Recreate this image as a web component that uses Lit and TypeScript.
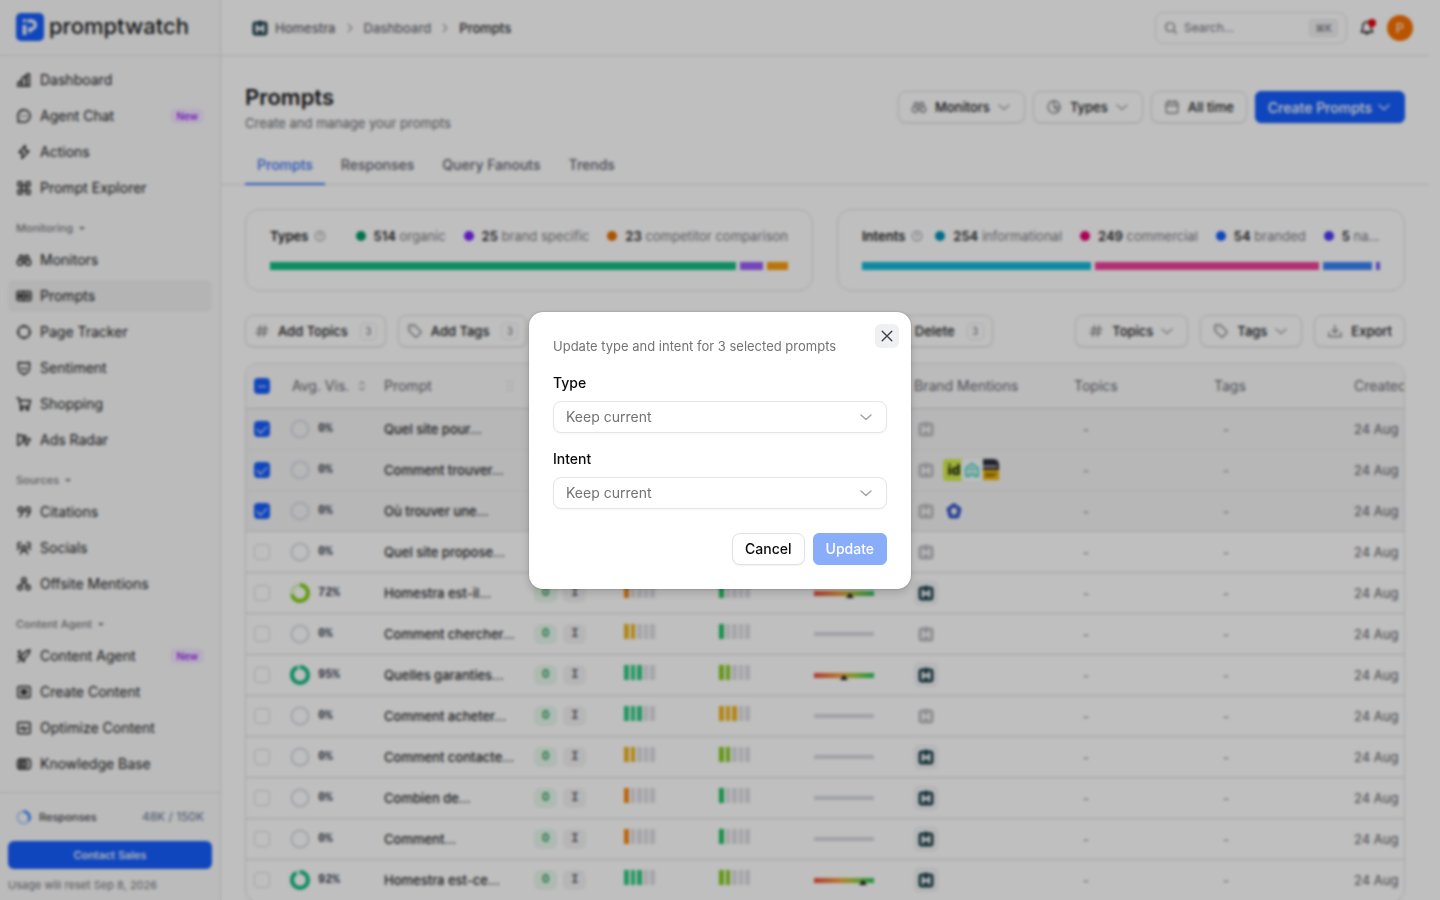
import { LitElement, html, svg, css, nothing } from "lit";
import { customElement, property } from "lit/decorators.js";
import { classMap } from "lit/directives/class-map.js";
import { styleMap } from "lit/directives/style-map.js";

const ICONS: Record<string, unknown> = {
  chart: svg`<path d="M2 14V10.500L5.500 9V14M6 14V6l4-2v10M10.500 14V2.500L13.500 2V14zM1.500 14h12.500"/>`,
  chat: svg`<path d="M8 1.800a6.200 6.200 0 1 1-2.700 11.800L2 14l.5-3.200A6.200 6.200 0 0 1 8 1.800zM5.500 8h.1M8 8h.1M10.500 8h.1"/>`,
  bolt: svg`<path d="M9.200 1.500 3 8.500h3.600l-.8 6L13 7H9.200z"/>`,
  grid: svg`<path d="M2 2h4v4H2zM10 2h4v4h-4zM2 10h4v4H2zM10 10h4v4h-4z"/><circle cx="8" cy="8" r="2.600"/>`,
  binoculars: svg`<path d="M3 6.500 4 3.500h2.500V7M13 6.500l-1-3H9.500V7M6.500 6h3M6.500 10h3"/><circle cx="4" cy="10.500" r="2.700"/><circle cx="12" cy="10.500" r="2.700"/>`,
  prompt: svg`<rect x="1" y="3.500" width="14" height="9" rx="1.500"/><path d="M7.500 3.500v9M3 6.500h2.500M3 8h2.500M3 9.500h2.500M9.500 6.500h3v3h-3z"/>`,
  target: svg`<circle cx="8" cy="8" r="6"/><path d="M8 1.200v2.300M8 12.500v2.300M1.200 8h2.300M12.500 8h2.300" stroke-width="1"/>`,
  shield: svg`<path d="M2.500 2.500 8 3l5.500-.5V8.500c0 2.500-2.500 4.500-5.500 6-3-1.500-5.500-3.500-5.500-6zM5.500 8c1.300 1.500 3.700 1.500 5 0"/>`,
  cart: svg`<path d="M1 2h2l1.800 8.500h8L14.500 4.500H3.700"/><circle cx="5.500" cy="13" r="1.200"/><circle cx="11.500" cy="13" r="1.200"/>`,
  radar: svg`<path d="M2 2v11.500l4.500-3M2 3l8.500 1.200M6.500 10.500l1-6M8.500 7h5.800l-1.800 3-2 3.500z"/>`,
  quotes: svg`<path d="M7 5.500a2.300 2.300 0 1 0-2.500 2.300H7V5.500c0 4-1 6-3.500 7M14 5.500a2.300 2.300 0 1 0-2.500 2.300H14V5.500c0 4-1 6-3.500 7"/>`,
  socials: svg`<circle cx="8" cy="8" r="2.200"/><path d="M4.500 14c.4-2.300 1.700-3.500 3.500-3.500s3.100 1.200 3.500 3.500M5 3a2 2 0 1 0-1.500 3.500M1.500 9.500 3.500 7M11 3a2 2 0 1 1 1.500 3.500M14.500 9.500 12.500 7"/>`,
  nodes: svg`<circle cx="8" cy="4.200" r="2.200"/><circle cx="4" cy="11.500" r="2.200"/><circle cx="12" cy="11.500" r="2.200"/><path d="M7 6.200 5.200 9.600M9 6.200l1.800 3.400"/>`,
  sparkpen: svg`<path d="M14 2 9.500 3.500 7 6.500 2 8.500l4 1.500 1.500 4 2-5 3-2.500zM2 14l3-3M3.500 2.500v3M2 4h3"/>`,
  create: svg`<rect x="1.800" y="2.500" width="12.400" height="11" rx="1.800"/><path d="M5 6h6M5 8h6M5 10h6M8 5.500v5"/>`,
  optimize: svg`<rect x="1.800" y="2.500" width="12.400" height="11" rx="1.200"/><path d="M4 8.500h2l1-2 1.500 4L10 8h2"/>`,
  knowledge: svg`<path d="M4.500 3h7A3 3 0 0 1 14.500 6v4a3 3 0 0 1-3 3h-7a3 3 0 0 1-3-3V6a3 3 0 0 1 3-3z"/><circle cx="8" cy="8" r="3"/><path d="M8 6v4M4 3v10"/>`,
  down: svg`<path d="m3 6 5 4.500L13 6"/>`,
  right: svg`<path d="m5.500 3 5 5-5 5"/>`,
  search: svg`<circle cx="7" cy="7" r="5"/><path d="m10.800 10.800 3.400 3.400"/>`,
  bell: svg`<path d="M8 2a4.300 4.300 0 0 0-4.300 4.300v3L2.200 12h11.600l-1.500-2.700v-3A4.300 4.300 0 0 0 8 2zM6.300 12.500c.2 2 3.200 2 3.400 0"/>`,
  types: svg`<circle cx="8" cy="8" r="6"/><path d="M8 2v6l4.300 4.300M8 8h6"/>`,
  calendar: svg`<rect x="2.200" y="3" width="11.600" height="11" rx="1.500"/><path d="M2.200 6.500h11.600M5.200 1.500V4M10.800 1.500V4"/>`,
  hash: svg`<path d="M6.500 2.500 4.800 13.500M11.200 2.500 9.500 13.500M3 6h11M2 10h11"/>`,
  tag: svg`<path d="M1.800 2.800v4.700l6.300 6.300a1.200 1.200 0 0 0 1.700 0l3.800-3.800a1.200 1.200 0 0 0 0-1.700L7.500 2H2.600a.8.8 0 0 0-.8.800z"/><path d="M5 5.200h.1"/>`,
  download: svg`<path d="M8 2.500v7M5.200 7 8 9.700 10.800 7M2 9.500v4h12v-4"/>`,
  help: svg`<circle cx="8" cy="8" r="6.500"/><path d="M6.400 6.500c.2-2 3.300-1.800 3.200 0 0 1-1.600 1.200-1.600 2.300M8 11h.1"/>`,
  sort: svg`<path d="M4.500 6 8 2.500 11.500 6M4.500 10 8 13.500l3.500-3.500"/>`,
  grip: svg`<path d="M6 3.500h.1M6 8h.1M6 12.500h.1M10 3.500h.1M10 8h.1M10 12.500h.1" stroke-width="2"/>`,
  close: svg`<path d="m3.200 3.200 9.600 9.600M12.800 3.200 3.200 12.800"/>`,
  swap: svg`<path d="M3 5h10M10 2l3 3-3 3M13 11H3M6 8l-3 3 3 3"/>`,
  trash: svg`<path d="M2.500 4h11M5.500 4V2h5v2M4 4l.7 10h6.600L12 4"/>`,
  brand: svg`<path d="M3.500 1.500h2.300L8 .3l2.200 1.200h2.300a3 3 0 0 1 3 3v8a3 3 0 0 1-3 3h-9a3 3 0 0 1-3-3v-8a3 3 0 0 1 3-3z" fill="currentColor" stroke="none"/><path d="M4.900 4.500v8M11.100 4.500v8M4.900 8.500h6.200" stroke="#f4f6f8" stroke-width="2.800" stroke-linecap="butt"/>`,
};

@customElement("pw-icon")
class PwIcon extends LitElement {
  @property() name = "chart";
  @property({ type: Number }) size = 16;
  static styles = css`
    :host { display: inline-flex; flex: none; }
    svg { display: block; fill: none; stroke: currentColor; stroke-width: 1.4; stroke-linecap: round; stroke-linejoin: round; }
  `;
  render() {
    return html`<svg width=${this.size} height=${this.size} viewBox="0 0 16 16" aria-hidden="true">${ICONS[this.name]}</svg>`;
  }
}

interface NavItem { icon: string; label: string; isNew?: boolean; active?: boolean }
const NAV: { title?: string; items: NavItem[] }[] = [
  { items: [
    { icon: "chart", label: "Dashboard" },
    { icon: "chat", label: "Agent Chat", isNew: true },
    { icon: "bolt", label: "Actions" },
    { icon: "grid", label: "Prompt Explorer" },
  ] },
  { title: "Monitoring", items: [
    { icon: "binoculars", label: "Monitors" },
    { icon: "prompt", label: "Prompts", active: true },
    { icon: "target", label: "Page Tracker" },
    { icon: "shield", label: "Sentiment" },
    { icon: "cart", label: "Shopping" },
    { icon: "radar", label: "Ads Radar" },
  ] },
  { title: "Sources", items: [
    { icon: "quotes", label: "Citations" },
    { icon: "socials", label: "Socials" },
    { icon: "nodes", label: "Offsite Mentions" },
  ] },
  { title: "Content Agent", items: [
    { icon: "sparkpen", label: "Content Agent", isNew: true },
    { icon: "create", label: "Create Content" },
    { icon: "optimize", label: "Optimize Content" },
    { icon: "knowledge", label: "Knowledge Base" },
  ] },
];

const base = css`
  * { box-sizing: border-box; }
  button, input, select { font: inherit; color: inherit; margin: 0; }
  button { cursor: pointer; }
  a { color: inherit; text-decoration: none; }
`;

@customElement("pw-sidebar")
class PwSidebar extends LitElement {
  static styles = [base, css`
    :host { display: flex; flex-direction: column; width: 221px; flex: none; background: #fafafa; border-right: 1px solid #e0e0e3; }
    .logo { display: flex; align-items: center; gap: 5px; height: 56px; flex: none; padding: 0 16px 2px; border-bottom: 1px solid #e0e0e3; font-size: 22px; line-height: 24px; font-weight: 500; color: #18181b; }
    .word { padding-bottom: 2px; }
    .mark { display: block; flex: none; }
    nav { flex: 1; min-height: 0; overflow: hidden; padding: 8px 8px 0; }
    .list { list-style: none; margin: 0; padding: 0; display: grid; gap: 4px; }
    .item { display: flex; align-items: center; gap: 8px; height: 32px; padding: 0 8px; border-radius: 6px; font-size: 14px; line-height: 20px; font-weight: 400; color: #18181b; }
    .active { background: #f0f0f1; }
    .label { flex: 1; }
    .new { padding: 0 6px; line-height: 16px; border-radius: 6px; background: #f3e8ff; color: #9810fa; font-size: 10px; font-weight: 500; }
    .group { display: flex; align-items: center; gap: 6px; height: 24px; margin: 12px 0 4px; padding: 0 8px; border: 0; background: none; font-size: 11px; font-weight: 500; color: #7c7c82; }
    .caret { border: 3px solid transparent; border-top-color: #71717b; border-bottom: 0; }
    footer { display: grid; gap: 16px; padding: 16px 8px 7px; border-top: 1px solid #e0e0e3; font-size: 12px; }
    .usage { display: flex; align-items: center; gap: 8px; padding: 0 8px; line-height: 16px; font-size: 11px; font-weight: 500; color: #3f3f46; }
    .count { margin-left: auto; font-size: 12px; font-weight: 400; color: #62748e; }
    .cta { height: 28px; border: 0; border-radius: 6px; background: #155dfc; color: #fff; font-size: 11px; font-weight: 500; }
    .note { margin: 0; line-height: 16px; font-size: 11px; color: #74747a; }
    .foot { display: grid; gap: 8px; }
  `];
  render() {
    return html`
      <div class="logo">
        <svg class="mark" width="28" height="28" viewBox="0 0 28 28" aria-hidden="true">
          <rect width="28" height="28" rx="5" fill="#155dfc"/>
          <path d="M8.500 22V12" stroke="#fff" stroke-width="3.600" fill="none"/>
          <path d="M8.500 9V6.200M11.500 7.800h3.700a4 4 0 0 1 0 8.200H14v3.500" stroke="#fff" stroke-width="3.200" fill="none"/>
        </svg>
        <span class="word">promptwatch</span>
      </div>
      <nav aria-label="Main">
        ${NAV.map((g) => html`
          ${g.title ? html`<button class="group">${g.title}<span class="caret"></span></button>` : nothing}
          <ul class="list">
            ${g.items.map((i) => html`<li><a href="#" class=${classMap({ item: true, active: !!i.active })}>
              <pw-icon name=${i.icon}></pw-icon><span class="label">${i.label}</span>
              ${i.isNew ? html`<span class="new">New</span>` : nothing}
            </a></li>`)}
          </ul>`)}
      </nav>
      <footer>
        <div class="usage">
          <svg width="15" height="15" viewBox="0 0 15 15" aria-hidden="true">
            <circle cx="7.500" cy="7.500" r="6" fill="none" stroke="#bcd6fb" stroke-width="2.500"/>
            <path d="M7.500 1.500a6 6 0 0 1 5 9.300" fill="none" stroke="#3c82f6" stroke-width="2.500"/>
          </svg>
          <span>Responses</span><span class="count">48K / 150K</span>
        </div>
        <div class="foot">
          <button class="cta">Contact Sales</button>
          <p class="note">Usage will reset Sep 8, 2026</p>
        </div>
      </footer>`;
  }
}

interface Seg { value: number; label: string; dot: string; bar: string }

@customElement("pw-breakdown")
class PwBreakdown extends LitElement {
  @property() heading = "";
  @property({ attribute: false }) segments: Seg[] = [];
  static styles = [base, css`
    :host { display: grid; gap: 16px; min-width: 0; padding: 16px 24px 20px; border: 1px solid #dedee1; border-radius: 14px; font-size: 13px; }
    .top { display: flex; align-items: center; gap: 12px; line-height: 20px; min-width: 0; }
    h2 { display: flex; align-items: center; gap: 6px; margin: 0; font-size: 13px; font-weight: 600; flex: none; }
    .help { color: #9f9fa9; }
    .legend { display: flex; justify-content: flex-end; gap: 18px; flex: 1; min-width: 0; margin: 0; padding: 0; list-style: none; }
    .entry { display: flex; align-items: center; flex: none; white-space: nowrap; color: #7c7c82; }
    .entry:last-child { flex: 0 1 auto; min-width: 0; }
    .dot { width: 10px; height: 10px; border-radius: 50%; margin-right: 8px; flex: none; }
    .text { overflow: hidden; text-overflow: ellipsis; }
    b { font-weight: 600; color: #27272a; }
    .bar { display: flex; gap: 4px; height: 8px; }
  `];
  render() {
    return html`
      <div class="top">
        <h2>${this.heading}<pw-icon class="help" name="help" size="12"></pw-icon></h2>
        <ul class="legend">
          ${this.segments.map((s) => html`<li class="entry"><span class="dot" style=${styleMap({ background: s.dot })}></span><span class="text"><b>${s.value}</b> ${s.label}</span></li>`)}
        </ul>
      </div>
      <div class="bar">${this.segments.map((s) => html`<span style=${styleMap({ flex: `${s.value} 1 0`, background: s.bar })}></span>`)}</div>`;
  }
}

const TYPES: Seg[] = [
  { value: 514, label: "organic", dot: "#009966", bar: "#12bc82" },
  { value: 25, label: "brand specific", dot: "#7f22fe", bar: "#9a5cf8" },
  { value: 23, label: "competitor comparison", dot: "#e17100", bar: "#f99c0a" },
];
const INTENTS: Seg[] = [
  { value: 254, label: "informational", dot: "#0092b8", bar: "#12b8d8" },
  { value: 249, label: "commercial", dot: "#e60076", bar: "#f0409a" },
  { value: 54, label: "branded", dot: "#155dfc", bar: "#3b82f6" },
  { value: 5, label: "navigational", dot: "#4f39f6", bar: "#6a5cf8" },
];

const ORANGE = "#f58a16", AMBER = "#edb31c", EMERALD = "#2bc97f", GREEN = "#21c064", LIME = "#85c91e";
interface Row {
  text: string; vis: number; checked?: boolean; ring?: string;
  vol: [number, string]; diff: [number, string]; sentiment?: number; mentioned?: boolean; rivals?: string[];
}
const ROWS: Row[] = [
  { text: "Quel site pour…", vis: 0, checked: true, vol: [1, ORANGE], diff: [1, GREEN] },
  { text: "Comment trouver…", vis: 0, checked: true, vol: [2, AMBER], diff: [2, LIME], rivals: ["id", "house", "split"] },
  { text: "Où trouver une…", vis: 0, checked: true, vol: [1, ORANGE], diff: [1, GREEN], rivals: ["penta"] },
  { text: "Quel site propose…", vis: 0, vol: [1, ORANGE], diff: [1, GREEN] },
  { text: "Homestra est-il…", vis: 72, ring: "#7ccf10", vol: [1, ORANGE], diff: [1, GREEN], sentiment: 60, mentioned: true },
  { text: "Comment chercher…", vis: 0, vol: [2, AMBER], diff: [1, GREEN] },
  { text: "Quelles garanties…", vis: 95, ring: "#10b981", vol: [3, EMERALD], diff: [2, LIME], sentiment: 50, mentioned: true },
  { text: "Comment acheter…", vis: 0, vol: [3, EMERALD], diff: [3, AMBER] },
  { text: "Comment contacte…", vis: 0, vol: [2, AMBER], diff: [2, LIME], mentioned: true },
  { text: "Combien de…", vis: 0, vol: [1, ORANGE], diff: [1, GREEN], mentioned: true },
  { text: "Comment…", vis: 0, vol: [1, ORANGE], diff: [1, GREEN], mentioned: true },
  { text: "Homestra est-ce…", vis: 92, ring: "#10b981", vol: [3, EMERALD], diff: [2, LIME], sentiment: 82, mentioned: true },
];

@customElement("pw-table")
class PwTable extends LitElement {
  static styles = [base, css`
    :host { display: block; flex: none; overflow: hidden; border: 1px solid #dedee1; border-radius: 12px; font-size: 13px; }
    table { table-layout: fixed; width: 1240px; border-collapse: separate; border-spacing: 0; }
    .c-check { width: 38px; } .c-vis { width: 92px; } .c-prompt { width: 150px; } .c-type { width: 90px; }
    .c-meter { width: 95px; } .c-sent { width: 100px; } .c-brand { width: 160px; } .c-list { width: 140px; }
    th, td { padding: 0 8px; text-align: left; font-weight: 500; white-space: nowrap; border-bottom: 1px solid #d6d6d9; overflow: hidden; }
    th { height: 45px; background: #fafafa; color: #66666e; font-size: 14px; line-height: 20px; font-weight: 400; }
    td { height: 41px; color: #27272a; }
    .sel td { background: #f4f4f5; border-bottom-color: #ececee; }
    .sel.last td { border-bottom-color: #dcdcdf; }
    .head, .vis, .types, .brands { display: flex; align-items: center; }
    .head { justify-content: space-between; }
    .faint { color: #8f8f98; }
    .fainter { color: #d4d4d8; }
    input { appearance: none; display: block; width: 16px; height: 16px; border: 1px solid #d8d8dc; border-radius: 4px; }
    input:checked, input:indeterminate { border: 0; background: #155dfc; display: grid; place-items: center; }
    input:checked::after { content: ""; width: 9px; height: 5px; border: solid #fff; border-width: 0 0 1px 1px; transform: translateY(-1px) rotate(-45deg); }
    input:indeterminate::after { content: ""; width: 8px; height: 1px; background: #fff; }
    .vis { gap: 8px; margin-left: -2px; font: 700 12px "Liberation Mono", monospace; color: #45475a; }
    .types { gap: 6px; }
    .pill { padding: 0 8px; border-radius: 6px; font: 700 12px/20px "Liberation Mono", monospace; background: #f3f3f4; color: #5f5f68; }
    .organic { background: #e8f9ee; color: #33a562; }
    .meter { display: flex; gap: 2px; width: 31px; height: 15px; margin-bottom: 5px; }
    .seg { flex: 1; background: #dcdde2; }
    .track { display: block; width: 60px; height: 4px; background: #d6d8de; }
    .scale { height: 5px; background: linear-gradient(90deg, #f04a3e, #f2a23a 45%, #a9c934 65%, #22c55e); }
    .tip { display: block; width: 0; border: 4px solid transparent; border-bottom: 5px solid #18181b; border-top: 0; transform: translate(-4px, 2px); }
    .brands { height: 24px; }
    .tile { display: grid; place-items: center; width: 24px; height: 24px; border-radius: 5px; border: 1px solid #e6e8ec; color: #1a3f47; background: #f4f6f8; }
    .off { color: #bcbcc0; background: none; border-color: transparent; }
    .rival { display: block; width: 22px; height: 22px; margin-right: -4px; }
    .rival:first-of-type { margin-left: 5px; }
    .dash { padding-left: 17px; color: #8a8a90; }
    .date { color: #5c5c63; font-weight: 400; font-size: 13px; }
  `];
  ring(r: Row) {
    return html`<svg width="20" height="20" viewBox="0 0 20 20" aria-hidden="true">
      ${r.ring
        ? svg`<circle cx="10" cy="10" r="8" fill="none" stroke=${r.ring} stroke-opacity=".25" stroke-width="4"/>
          <circle cx="10" cy="10" r="8" fill="none" stroke=${r.ring} stroke-width="4" pathLength="100" stroke-dasharray="${r.vis} 100" transform="rotate(-90 10 10)"/>`
        : svg`<circle cx="10" cy="10" r="8.500" fill="none" stroke="#d6d9e2" stroke-width="2"/>`}
    </svg>`;
  }
  meter([n, color]: [number, string]) {
    return html`<div class="meter">${[0, 1, 2, 3, 4].map((i) => html`<span class="seg" style=${i < n ? styleMap({ background: color }) : nothing}></span>`)}</div>`;
  }
  rival(kind: string) {
    const art: Record<string, unknown> = {
      id: svg`<rect width="22" height="22" rx="4" fill="#d3ee4a"/><text x="11" y="16" text-anchor="middle" font-size="14" font-weight="800" fill="#222b12">id</text>`,
      house: svg`<rect width="22" height="22" rx="4" fill="#fafdfd"/><path d="M5 17h3.500a2.500 2.500 0 0 1 5 0H17V9l-6-4.500L5 9zM7.500 11.500 11 9l3.500 2.500" fill="none" stroke="#3cd0bd" stroke-width="1.800"/>`,
      split: svg`<path d="M4 0h10q6 0 6 6v5H4z" fill="#2b2b36"/><path d="M4 6h14v3H4z" fill="#8b8b93"/><path d="M4 11h16v10H4z" fill="#f2b600"/><path d="M6 15h12M6 17h9" stroke="#8a6a10" stroke-width="1.500"/>`,
      penta: svg`<rect width="22" height="22" rx="4" fill="#f5f6fa"/><path d="M11 5 16.500 9 14.500 16.500h-7L5.500 9z" fill="none" stroke="#3a56c8" stroke-width="4" stroke-linejoin="round"/>`,
    };
    return html`<svg class="rival" viewBox="0 0 22 22" aria-hidden="true">${art[kind]}</svg>`;
  }
  render() {
    return html`<table>
      <colgroup><col class="c-check"><col class="c-vis"><col class="c-prompt"><col class="c-type"><col class="c-meter"><col class="c-meter"><col class="c-sent"><col class="c-brand"><col class="c-list"><col class="c-list"><col class="c-list"></colgroup>
      <thead><tr>
        <th><input type="checkbox" aria-label="Select all" .indeterminate=${true}></th>
        <th><span class="head">Avg. Vis.<pw-icon class="faint" name="sort" size="12"></pw-icon></span></th>
        <th><span class="head">Prompt<pw-icon class="fainter" name="grip" size="16"></pw-icon></span></th>
        <th>Type</th><th>Volume</th><th>Difficulty</th><th>Sentiment</th><th>Brand Mentions</th><th>Topics</th><th>Tags</th><th>Created</th>
      </tr></thead>
      <tbody>${ROWS.map((r, i) => html`<tr class=${classMap({ sel: !!r.checked, last: i === 2 })}>
        <td><input type="checkbox" aria-label=${r.text} .checked=${!!r.checked}></td>
        <td><span class="vis">${this.ring(r)}<span>${r.vis}%</span></span></td>
        <td>${r.text}</td>
        <td><span class="types"><span class="pill organic">O</span><span class="pill">I</span></span></td>
        <td>${this.meter(r.vol)}</td>
        <td>${this.meter(r.diff)}</td>
        <td>${r.sentiment
          ? html`<span class="track scale"><span class="tip" style=${styleMap({ "margin-left": `${r.sentiment}%` })}></span></span>`
          : html`<span class="track"></span>`}</td>
        <td><span class="brands"><span class=${classMap({ tile: true, off: !r.mentioned })}><pw-icon name="brand"></pw-icon></span>${(r.rivals ?? []).map((k) => this.rival(k))}</span></td>
        <td class="dash">-</td><td class="dash">-</td><td class="date">24 Aug</td>
      </tr>`)}</tbody>
    </table>`;
  }
}

@customElement("pw-bulk-dialog")
class PwBulkDialog extends LitElement {
  static styles = [base, css`
    :host { position: fixed; inset: 0; z-index: 10; display: grid; place-items: center; background: rgba(0, 0, 0, 0.25); backdrop-filter: blur(1.5px); }
    .dialog { position: relative; width: 382px; max-width: calc(100% - 32px); padding: 24px; border-radius: 14px; background: #fff; box-shadow: 0 0 2px rgba(0, 0, 0, 0.3), 0 4px 10px rgba(0, 0, 0, 0.16); font-size: 14px; color: #0a0a0a; }
    .desc { margin: 0 0 16px; font-size: 13px; line-height: 21px; color: #737373; }
    .close { position: absolute; top: 12px; right: 12px; display: grid; place-items: center; width: 24px; height: 24px; padding: 0; border: 0; border-radius: 6px; background: #eff0f4; color: #3f3f46; }
    .fields { display: grid; gap: 16px; }
    .field { display: grid; gap: 8px; }
    label { line-height: 20px; font-weight: 500; }
    .wrap { display: grid; align-items: center; position: relative; }
    select { appearance: none; width: 100%; height: 32px; padding: 0 36px 0 12px; border: 1px solid #e5e5e5; border-radius: 8px; background: #fff; color: #737373; box-shadow: 0 1px 2px rgba(0, 0, 0, 0.04); }
    .chev { position: absolute; right: 13px; color: #a1a1a1; pointer-events: none; }
    .actions { display: flex; justify-content: flex-end; gap: 8px; margin-top: 24px; }
    .btn { height: 32px; padding: 0 12px; border: 1px solid #e2e2e2; border-radius: 8px; background: #fff; font-weight: 500; box-shadow: 0 1px 2px rgba(0, 0, 0, 0.06); }
    .primary { border-color: #8aadf9; background: #8aadf9; color: #fff; box-shadow: none; border-radius: 6px; }
  `];
  render() {
    const field = (id: string, label: string, options: string[]) => html`<div class="field">
      <label for=${id}>${label}</label>
      <div class="wrap"><select id=${id}><option>Keep current</option>${options.map((o) => html`<option>${o}</option>`)}</select><pw-icon class="chev" name="down"></pw-icon></div>
    </div>`;
    return html`<section class="dialog" role="dialog" aria-modal="true" aria-describedby="desc">
      <p class="desc" id="desc">Update type and intent for 3 selected prompts</p>
      <button class="close" aria-label="Close"><pw-icon name="close" size="16"></pw-icon></button>
      <div class="fields">
        ${field("type", "Type", ["Organic", "Brand specific", "Competitor comparison"])}
        ${field("intent", "Intent", ["Informational", "Commercial", "Branded", "Navigational"])}
      </div>
      <div class="actions"><button class="btn">Cancel</button><button class="btn primary" disabled>Update</button></div>
    </section>`;
  }
}

@customElement("app-root")
class AppRoot extends LitElement {
  static styles = [base, css`
    :host { display: flex; height: 100vh; overflow: hidden; font-family: Inter, "Liberation Sans", sans-serif; font-size: 14px; color: #18181b; background: #fff; }
    .main { flex: 1; min-width: 0; display: flex; flex-direction: column; margin-right: 11px; }
    .topbar { display: flex; align-items: center; gap: 12px; flex: none; height: 56px; padding: 0 16px 0 31px; border-bottom: 1px solid #e0e0e3; }
    .crumbs { display: flex; align-items: center; gap: 8px; font-size: 13px; font-weight: 500; color: #71717a; }
    .home { display: flex; align-items: center; gap: 7px; color: #63636b; }
    .home pw-icon { color: #1a3f47; }
    .here { color: #27272a; }
    .search { display: flex; align-items: center; gap: 6px; margin-left: auto; width: 192px; height: 32px; padding: 0 8px; border: 1px solid #dedee1; border-radius: 8px; color: #71717a; font-size: 12px; }
    .search input { flex: 1; min-width: 0; border: 0; padding: 0; outline: 0; background: none; }
    .search input::placeholder { color: #71717a; opacity: 1; }
    kbd { padding: 0 5px; border: 1px solid #e4e4e7; border-radius: 4px; background: #f1f1f2; font: 500 10px/16px Inter, sans-serif; }
    .bell { position: relative; display: flex; padding: 0; border: 0; background: none; }
    .alert { position: absolute; top: -1px; right: -1px; width: 8px; height: 8px; border-radius: 50%; background: #e7000b; }
    .avatar { display: grid; place-items: center; width: 26px; height: 26px; border-radius: 50%; background: #f97000; color: #fff; font-size: 13px; }
    .page-head { display: flex; align-items: center; justify-content: space-between; padding: 25px 24px 0; flex: none; }
    h1 { margin: 0; font-size: 22px; line-height: 32px; font-weight: 600; }
    .sub { margin: 0; font-size: 13px; line-height: 20px; color: #6b6b70; }
    .row { display: flex; align-items: center; gap: 8px; }
    .btn { display: inline-flex; align-items: center; gap: 8px; height: 32px; padding: 0 12px; border: 1px solid #dcdcdf; border-radius: 8px; background: #fff; box-shadow: 0 1px 2px rgba(0, 0, 0, 0.08); font-size: 13px; font-weight: 500; white-space: nowrap; color: #18181b; }
    .btn pw-icon { color: #85858a; }
    .btn .chev { margin-left: -2px; color: #a1a1aa; }
    .primary { background: #155dfc; border-color: #155dfc; color: #fff; border-radius: 6px; font-size: 14px; }
    .primary .chev { margin-left: -4px; color: #dbe6ff; }
    .tabs { display: flex; gap: 4px; flex: none; padding: 12px 24px 0; border-bottom: 1px solid #e0e0e3; }
    .tab { padding: 10px 12px 8px; line-height: 20px; font-weight: 500; color: #62626d; border-bottom: 2px solid transparent; margin-bottom: -1px; }
    .on { color: #3973f5; border-color: #3973f5; }
    .cards { display: grid; grid-template-columns: 1fr 1fr; gap: 24px; padding: 24px 24px 0; flex: none; }
    .tools { display: flex; justify-content: space-between; padding: 24px 24px 16px; flex: none; }
    .tools .row { gap: 12px; }
    .bulk { padding: 0 8px; }
    .num { display: grid; place-items: center; width: 17px; height: 17px; margin-left: 4px; border: 1px solid #e4e4e7; border-radius: 4px; font-size: 10px; font-weight: 400; color: #71717a; }
    pw-table { margin: 0 24px; }
  `];
  render() {
    const drop = (icon: string, label: string) => html`<button class="btn"><pw-icon name=${icon}></pw-icon>${label}<pw-icon class="chev" name="down"></pw-icon></button>`;
    const bulk = (icon: string, label: string) => html`<button class="btn bulk"><pw-icon name=${icon}></pw-icon>${label}<span class="num">3</span></button>`;
    return html`
      <pw-sidebar></pw-sidebar>
      <main class="main">
        <header class="topbar">
          <div class="crumbs">
            <a class="home" href="#"><pw-icon name="brand"></pw-icon>Homestra</a>
            <pw-icon name="right" size="12"></pw-icon><a href="#">Dashboard</a>
            <pw-icon name="right" size="12"></pw-icon><span class="here">Prompts</span>
          </div>
          <label class="search"><pw-icon name="search" size="14"></pw-icon><input type="search" aria-label="Search" placeholder="Search…"><kbd>⌘K</kbd></label>
          <button class="bell" aria-label="Notifications"><pw-icon name="bell"></pw-icon><span class="alert"></span></button>
          <span class="avatar">P</span>
        </header>
        <div class="page-head">
          <div><h1>Prompts</h1><p class="sub">Create and manage your prompts</p></div>
          <div class="row">
            ${drop("binoculars", "Monitors")}${drop("types", "Types")}
            <button class="btn"><pw-icon name="calendar"></pw-icon>All time</button>
            <button class="btn primary">Create Prompts<pw-icon class="chev" name="down"></pw-icon></button>
          </div>
        </div>
        <nav class="tabs" aria-label="Views">
          <a class="tab on" href="#">Prompts</a><a class="tab" href="#">Responses</a><a class="tab" href="#">Query Fanouts</a><a class="tab" href="#">Trends</a>
        </nav>
        <div class="cards">
          <pw-breakdown heading="Types" .segments=${TYPES}></pw-breakdown>
          <pw-breakdown heading="Intents" .segments=${INTENTS}></pw-breakdown>
        </div>
        <div class="tools">
          <div class="row">${bulk("hash", "Add Topics")}${bulk("tag", "Add Tags")}${bulk("swap", "Change Type")}${bulk("binoculars", "Assign Monitor")}${bulk("trash", "Delete")}</div>
          <div class="row">${drop("hash", "Topics")}${drop("tag", "Tags")}<button class="btn"><pw-icon name="download"></pw-icon>Export</button></div>
        </div>
        <pw-table></pw-table>
      </main>
      <pw-bulk-dialog></pw-bulk-dialog>`;
  }
}
